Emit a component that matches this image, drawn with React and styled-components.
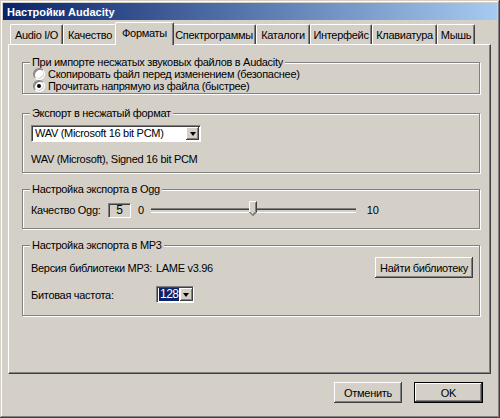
import React from 'react';
import styled, { createGlobalStyle } from 'styled-components';

const GlobalStyle = createGlobalStyle`
  html, body {
    margin: 0;
    padding: 0;
    background: #d4d0c8;
  }
  * {
    box-sizing: border-box;
  }
`;

const Window = styled.div`
  width: 500px;
  height: 418px;
  padding: 3px;
  background: #d4d0c8;
  display: flex;
  flex-direction: column;
  font-family: "Liberation Sans", Arial, sans-serif;
  font-size: 11px;
  letter-spacing: -0.3px;
  color: #000;
  box-shadow: inset -1px -1px #404040, inset 1px 1px #d4d0c8,
    inset -2px -2px #808080, inset 2px 2px #ffffff;
  overflow: hidden;
`;

const TitleBar = styled.div`
  height: 17px;
  display: flex;
  align-items: center;
  padding-left: 4px;
  background: linear-gradient(to right, #0a246a, #a6caf0);
  color: #fff;
  font-weight: bold;
  font-size: 11px;
  letter-spacing: 0;
`;

const Body = styled.div`
  flex: 1;
  display: flex;
  flex-direction: column;
  padding: 0 6px 0 5px;
`;

const TabStrip = styled.div`
  height: 24px;
  display: flex;
  align-items: flex-end;
  padding-left: 2px;
  position: relative;
  z-index: 1;
`;

const Tab = styled.div`
  width: ${p => p.$w}px;
  height: ${p => (p.$active ? 23 : 20)}px;
  margin: ${p => (p.$active ? '0 -2px -1px -2px' : '0')};
  display: flex;
  align-items: center;
  justify-content: center;
  background: #d4d0c8;
  border-top-left-radius: 2px;
  border-top-right-radius: 2px;
  border-left: 1px solid #fff;
  border-top: 1px solid #fff;
  border-right: 1px solid #404040;
  box-shadow: inset -1px 0 #808080;
  padding-bottom: ${p => (p.$active ? '3px' : '0')};
  white-space: nowrap;
  position: relative;
  z-index: ${p => (p.$active ? 2 : 1)};
`;

const Panel = styled.div`
  height: 330px;
  display: flex;
  flex-direction: column;
  padding: 0 10px 0 13px;
  border-left: 1px solid #fff;
  border-top: 1px solid #fff;
  border-right: 1px solid #404040;
  border-bottom: 1px solid #404040;
  box-shadow: inset -1px -1px #808080;
`;

const Group = styled.div`
  position: relative;
  height: ${p => p.$h}px;
  margin-top: ${p => p.$mt}px;
  border: 1px solid #808080;
  box-shadow: inset 1px 1px #fff, 1px 1px #fff;
  padding: ${p => p.$pad || '0 8px'};
  display: flex;
  flex-direction: column;
`;

const Legend = styled.span`
  position: absolute;
  top: -7px;
  left: 7px;
  padding: 0 2px;
  background: #d4d0c8;
  line-height: 13px;
  white-space: nowrap;
`;

const RadioRow = styled.label`
  display: flex;
  align-items: center;
  height: 12px;
  margin-left: 2px;
  gap: 3px;
  white-space: nowrap;
`;

const RadioDot = styled.span`
  width: 12px;
  height: 12px;
  border-radius: 50%;
  background: #fff;
  box-shadow: inset 1px 1px #808080, inset -1px -1px #d4d0c8;
  border: 1px solid;
  border-color: #808080 #fff #fff #808080;
  position: relative;
  flex: none;

  &::after {
    content: '';
    display: ${p => (p.$on ? 'block' : 'none')};
    position: absolute;
    left: 3px;
    top: 3px;
    width: 4px;
    height: 4px;
    border-radius: 50%;
    background: #000;
  }
`;

const Combo = styled.div`
  width: ${p => p.$w}px;
  height: 17px;
  display: flex;
  align-items: center;
  background: #fff;
  border: 1px solid;
  border-color: #808080 #fff #fff #808080;
  box-shadow: inset 1px 1px #404040;
  padding: 1px 1px 1px 2px;
`;

const ComboText = styled.span`
  flex: 1;
  height: 13px;
  line-height: 13px;
  padding-left: 1px;
  white-space: nowrap;
  background: ${p => (p.$sel ? '#0a246a' : 'transparent')};
  color: ${p => (p.$sel ? '#fff' : '#000')};
  font-size: ${p => (p.$sel ? '12px' : 'inherit')};
  letter-spacing: ${p => (p.$sel ? '-0.5px' : 'inherit')};
  margin-right: 1px;
`;

const ArrowBtn = styled.span`
  width: 13px;
  height: 13px;
  flex: none;
  background: #d4d0c8;
  box-shadow: inset -1px -1px #404040, inset 1px 1px #fff,
    inset -2px -2px #808080;
  display: flex;
  align-items: center;
  justify-content: center;

  &::after {
    content: '';
    border-left: 3.5px solid transparent;
    border-right: 3.5px solid transparent;
    border-top: 4px solid #000;
    margin-top: 1px;
  }
`;

const Row = styled.div`
  display: flex;
  align-items: center;
  height: ${p => p.$h || 13}px;
  margin-top: ${p => p.$mt || 0}px;
  white-space: nowrap;
`;

const Label = styled.span`
  width: ${p => (p.$w ? `${p.$w}px` : 'auto')};
  flex: none;
`;

const NumBox = styled.span`
  width: 23px;
  height: 15px;
  margin: 0 7px 0 0;
  display: flex;
  align-items: center;
  justify-content: center;
  border: 1px solid;
  border-color: #808080 #fff #fff #808080;
  box-shadow: inset 1px 1px #404040;
  font-size: 12px;
`;

const Track = styled.div`
  width: 205px;
  flex: none;
  position: relative;
  height: 16px;
  margin: 0 11px 0 7px;

  &::before {
    content: '';
    position: absolute;
    left: 0;
    right: 0;
    top: 6px;
    height: 3px;
    border-top: 1px solid #808080;
    border-bottom: 1px solid #fff;
    box-shadow: inset 0 1px #404040;
  }
`;

const Thumb = styled.svg`
  position: absolute;
  top: -1px;
  width: 8px;
  height: 15px;
`;

const Button = styled.button`
  width: ${p => p.$w}px;
  height: ${p => p.$h || 21}px;
  font-family: inherit;
  font-size: 11px;
  letter-spacing: -0.3px;
  color: #000;
  background: #d4d0c8;
  border: ${p => (p.$default ? '1px solid #000' : 'none')};
  padding: 0;
  box-shadow: inset -1px -1px #404040, inset 1px 1px #fff,
    inset -2px -2px #808080;
  white-space: nowrap;
`;

const Spacer = styled.div`
  flex: 1;
`;

const ButtonRow = styled.div`
  display: flex;
  justify-content: flex-end;
  gap: 12px;
  margin-top: 8px;
  padding-right: 8px;
`;

const tabs = [
  { name: 'Audio I/O', w: 53 },
  { name: 'Качество', w: 54 },
  { name: 'Форматы', w: 59, active: true },
  { name: 'Спектрограммы', w: 84 },
  { name: 'Каталоги', w: 54 },
  { name: 'Интерфейс', w: 62 },
  { name: 'Клавиатура', w: 65 },
  { name: 'Мышь', w: 38 },
];

// положение ползунка качества Ogg (0..10)
const oggQuality = 5;

function App() {
  return (
    <>
      <GlobalStyle />
      <Window>
        <TitleBar>Настройки Audacity</TitleBar>
        <Body>
          <TabStrip>
            {tabs.map(t => (
              <Tab key={t.name} $w={t.w} $active={t.active}>{t.name}</Tab>
            ))}
          </TabStrip>

          <Panel>
            <Group $h={32} $mt={17} $pad="5px 8px 0 8px">
              <Legend>При импорте несжатых звуковых файлов в Audacity</Legend>
              <RadioRow>
                <RadioDot />
                Скопировать файл перед изменением (безопаснее)
              </RadioRow>
              <RadioRow>
                <RadioDot $on />
                Прочитать напрямую из файла (быстрее)
              </RadioRow>
            </Group>

            <Group $h={60} $mt={19} $pad="11px 8px 0 8px">
              <Legend>Экспорт в несжатый формат</Legend>
              <Combo $w={170}>
                <ComboText>WAV (Microsoft 16 bit PCM)</ComboText>
                <ArrowBtn />
              </Combo>
              <Row $mt={10}>WAV (Microsoft), Signed 16 bit PCM</Row>
            </Group>

            <Group $h={40} $mt={16} $pad="12px 8px 0 8px">
              <Legend>Настройка экспорта в Ogg</Legend>
              <Row $h={16}>
                <Label $w={77}>Качество Ogg:</Label>
                <NumBox>{oggQuality}</NumBox>
                <span>0</span>
                <Track>
                  <Thumb
                    viewBox="0 0 8 15"
                    style={{ left: `calc(${oggQuality * 10}% - 4px)` }}
                  >
                    <path d="M0 0H8V11L4 15L0 11Z" fill="#d4d0c8" />
                    <path d="M0.5 11V0.5H7.5" fill="none" stroke="#fff" />
                    <path d="M7.5 0.5V11L4 14.5L0.5 11" fill="none" stroke="#404040" />
                    <path d="M6.5 1.5V10.6L4 13.1" fill="none" stroke="#808080" />
                  </Thumb>
                </Track>
                <span>10</span>
              </Row>
            </Group>

            <Group $h={71} $mt={16} $pad="11px 6px 0 8px">
              <Legend>Настройка экспорта в MP3</Legend>
              <Row $h={21}>
                <Label $w={125}>Версия библиотеки MP3:</Label>
                <span>LAME v3.96</span>
                <Spacer />
                <Button $w={98}>Найти библиотеку</Button>
              </Row>
              <Row $h={17} $mt={8}>
                <Label $w={125}>Битовая частота:</Label>
                <Combo $w={38}>
                  <ComboText $sel>128</ComboText>
                  <ArrowBtn />
                </Combo>
              </Row>
            </Group>
          </Panel>

          <ButtonRow>
            <Button $w={68}>Отменить</Button>
            <Button $w={69} $default>OK</Button>
          </ButtonRow>
        </Body>
      </Window>
    </>
  );
}

export default App;
